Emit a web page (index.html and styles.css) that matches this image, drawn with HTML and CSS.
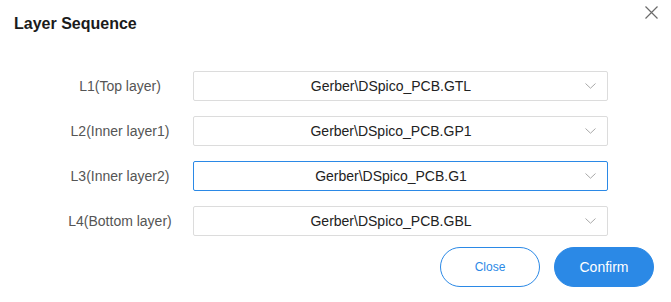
FILE: index.html
```html
<!DOCTYPE html>
<html>
<head>
    <meta charset="UTF-8">
    <meta name="viewport" content="width=device-width, initial-scale=1.0">
    <title>Layer Sequence</title>
    <link rel="stylesheet" href="styles.css">
</head>
<body>
    <div class="dialog">
        <div class="header">
            <h2 class="title">Layer Sequence</h2>
            <button class="close-x" aria-label="Close">
                <svg width="13" height="13" viewBox="0 0 13 13">
                    <path d="M0.5 0.5 L12.5 12.5 M12.5 0.5 L0.5 12.5" stroke="#6b6b6b" stroke-width="1.2" fill="none"/>
                </svg>
            </button>
        </div>

        <!-- Layer rows -->
        <div class="rows">
            <div class="row">
                <label class="label">L1(Top layer)</label>
                <div class="select">
                    <span class="value">Gerber\DSpico_PCB.GTL</span>
                    <svg class="arrow" width="11" height="6" viewBox="0 0 11 6"><path d="M0.5 0.5 L5.5 5.2 L10.5 0.5" stroke="#a8a8a8" stroke-width="1" fill="none"/></svg>
                </div>
            </div>
            <div class="row">
                <label class="label">L2(Inner layer1)</label>
                <div class="select">
                    <span class="value">Gerber\DSpico_PCB.GP1</span>
                    <svg class="arrow" width="11" height="6" viewBox="0 0 11 6"><path d="M0.5 0.5 L5.5 5.2 L10.5 0.5" stroke="#a8a8a8" stroke-width="1" fill="none"/></svg>
                </div>
            </div>
            <div class="row">
                <label class="label">L3(Inner layer2)</label>
                <div class="select focused">
                    <span class="value">Gerber\DSpico_PCB.G1</span>
                    <svg class="arrow" width="11" height="6" viewBox="0 0 11 6"><path d="M0.5 0.5 L5.5 5.2 L10.5 0.5" stroke="#a8a8a8" stroke-width="1" fill="none"/></svg>
                </div>
            </div>
            <div class="row">
                <label class="label">L4(Bottom layer)</label>
                <div class="select">
                    <span class="value">Gerber\DSpico_PCB.GBL</span>
                    <svg class="arrow" width="11" height="6" viewBox="0 0 11 6"><path d="M0.5 0.5 L5.5 5.2 L10.5 0.5" stroke="#a8a8a8" stroke-width="1" fill="none"/></svg>
                </div>
            </div>
        </div>

        <div class="footer">
            <button class="btn btn-close">Close</button>
            <button class="btn btn-confirm">Confirm</button>
        </div>
    </div>
</body>
</html>
```

FILE: styles.css
```css
body {
    margin: 0;
    font-family: "Liberation Sans", Arial, Helvetica, sans-serif;
    background: #fff;
}

.dialog {
    width: 671px;
    height: 302px;
    background: #fff;
}

.header {
    display: flex;
    justify-content: space-between;
    align-items: flex-start;
    padding: 6px 13px 0 14px;
}

.title {
    margin: 8px 0 0 0;
    font-size: 16px;
    line-height: 20px;
    font-weight: bold;
    color: #1b1b1b;
}

.close-x {
    border: none;
    background: none;
    padding: 0;
    width: 13px;
    height: 13px;
    cursor: pointer;
    display: flex;
}

/* Rows */
.rows {
    display: flex;
    flex-direction: column;
    gap: 15px;
    margin-top: 37px;
    padding-left: 50px;
}

.row {
    display: flex;
    align-items: center;
}

.label {
    width: 140px;
    margin-right: 3px;
    text-align: center;
    font-size: 14px;
    color: #555;
}

.select {
    box-sizing: border-box;
    width: 415px;
    height: 30px;
    border: 1px solid #dcdcdc;
    border-radius: 2px;
    display: flex;
    align-items: center;
    padding: 0 11px 0 3px;
}

.select.focused {
    border-color: #2b89e6;
}

.value {
    flex: 1;
    text-align: center;
    font-size: 14px;
    color: #222;
}

.arrow {
    display: block;
}

/* Footer */
.footer {
    display: flex;
    justify-content: flex-end;
    gap: 14px;
    padding: 11px 17px 0 0;
}

.btn {
    box-sizing: border-box;
    width: 100px;
    height: 40px;
    border-radius: 20px;
    font-family: "Liberation Sans", Arial, sans-serif;
    cursor: pointer;
}

.btn-close {
    background: #fff;
    border: 1px solid #2b89e6;
    color: #2b89e6;
    font-size: 12px;
}

.btn-confirm {
    background: #2b89e6;
    border: 1px solid #2b89e6;
    color: #fff;
    font-size: 14px;
}
```
